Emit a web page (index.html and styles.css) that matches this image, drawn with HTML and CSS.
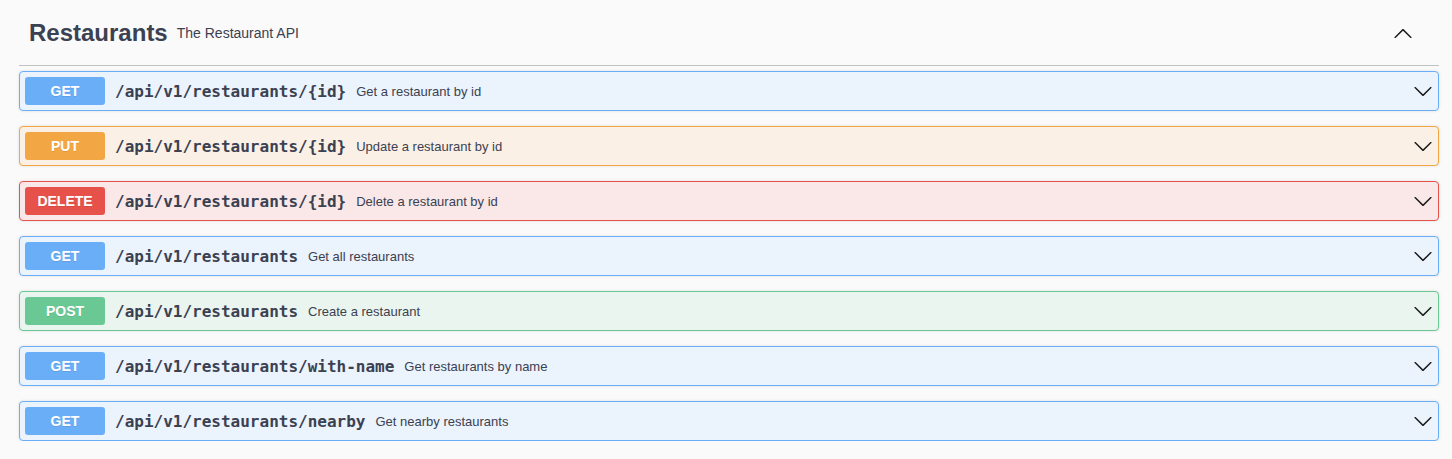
FILE: index.html
```html
<!DOCTYPE html>
<html>
<head>
<meta charset="utf-8">
<link rel="stylesheet" href="styles.css">
</head>
<body>
<div class="tag-section">
  <div class="tag-header">
    <div class="tag-title">
      <span class="tag-name">Restaurants</span>
      <span class="tag-desc">The Restaurant API</span>
    </div>
    <svg class="arrow arrow-up" width="20" height="20" viewBox="0 0 20 20"><path d="M17.418 6.109c.272-.268.709-.268.979 0s.271.701 0 .969l-7.908 7.83c-.27.268-.707.268-.979 0l-7.908-7.830c-.27-.268-.27-.701 0-.969.271-.268.709-.268.979 0L10 13.25l7.418-7.141z"/></svg>
  </div>
  <div class="ops">
    <div class="op get">
      <span class="method">GET</span>
      <span class="path">/api/v1/restaurants/{id}</span>
      <span class="desc">Get a restaurant by id</span>
      <svg class="arrow" width="20" height="20" viewBox="0 0 20 20"><path d="M17.418 6.109c.272-.268.709-.268.979 0s.271.701 0 .969l-7.908 7.83c-.27.268-.707.268-.979 0l-7.908-7.83c-.27-.268-.27-.701 0-.969.271-.268.709-.268.979 0L10 13.25l7.418-7.141z"/></svg>
    </div>
    <div class="op put">
      <span class="method">PUT</span>
      <span class="path">/api/v1/restaurants/{id}</span>
      <span class="desc">Update a restaurant by id</span>
      <svg class="arrow" width="20" height="20" viewBox="0 0 20 20"><path d="M17.418 6.109c.272-.268.709-.268.979 0s.271.701 0 .969l-7.908 7.83c-.27.268-.707.268-.979 0l-7.908-7.83c-.27-.268-.27-.701 0-.969.271-.268.709-.268.979 0L10 13.25l7.418-7.141z"/></svg>
    </div>
    <div class="op delete">
      <span class="method">DELETE</span>
      <span class="path">/api/v1/restaurants/{id}</span>
      <span class="desc">Delete a restaurant by id</span>
      <svg class="arrow" width="20" height="20" viewBox="0 0 20 20"><path d="M17.418 6.109c.272-.268.709-.268.979 0s.271.701 0 .969l-7.908 7.83c-.27.268-.707.268-.979 0l-7.908-7.83c-.27-.268-.27-.701 0-.969.271-.268.709-.268.979 0L10 13.25l7.418-7.141z"/></svg>
    </div>
    <div class="op get">
      <span class="method">GET</span>
      <span class="path">/api/v1/restaurants</span>
      <span class="desc">Get all restaurants</span>
      <svg class="arrow" width="20" height="20" viewBox="0 0 20 20"><path d="M17.418 6.109c.272-.268.709-.268.979 0s.271.701 0 .969l-7.908 7.83c-.27.268-.707.268-.979 0l-7.908-7.83c-.27-.268-.27-.701 0-.969.271-.268.709-.268.979 0L10 13.25l7.418-7.141z"/></svg>
    </div>
    <div class="op post">
      <span class="method">POST</span>
      <span class="path">/api/v1/restaurants</span>
      <span class="desc">Create a restaurant</span>
      <svg class="arrow" width="20" height="20" viewBox="0 0 20 20"><path d="M17.418 6.109c.272-.268.709-.268.979 0s.271.701 0 .969l-7.908 7.83c-.27.268-.707.268-.979 0l-7.908-7.83c-.27-.268-.27-.701 0-.969.271-.268.709-.268.979 0L10 13.25l7.418-7.141z"/></svg>
    </div>
    <div class="op get">
      <span class="method">GET</span>
      <span class="path">/api/v1/restaurants/with-name</span>
      <span class="desc">Get restaurants by name</span>
      <svg class="arrow" width="20" height="20" viewBox="0 0 20 20"><path d="M17.418 6.109c.272-.268.709-.268.979 0s.271.701 0 .969l-7.908 7.83c-.27.268-.707.268-.979 0l-7.908-7.83c-.27-.268-.27-.701 0-.969.271-.268.709-.268.979 0L10 13.25l7.418-7.141z"/></svg>
    </div>
    <div class="op get">
      <span class="method">GET</span>
      <span class="path">/api/v1/restaurants/nearby</span>
      <span class="desc">Get nearby restaurants</span>
      <svg class="arrow" width="20" height="20" viewBox="0 0 20 20"><path d="M17.418 6.109c.272-.268.709-.268.979 0s.271.701 0 .969l-7.908 7.83c-.27.268-.707.268-.979 0l-7.908-7.83c-.27-.268-.27-.701 0-.969.271-.268.709-.268.979 0L10 13.25l7.418-7.141z"/></svg>
    </div>
  </div>
</div>
</body>
</html>
```
FILE: styles.css
```css
html, body {
  margin: 0;
  padding: 0;
  background: #fafafa;
  font-family: "Liberation Sans", Arial, sans-serif;
  color: #3b4151;
}

.tag-section {
  padding: 0 13px 0 19px;
}

.tag-header {
  height: 65px;
  display: flex;
  align-items: center;
  justify-content: space-between;
  border-bottom: 1px solid rgba(59, 65, 81, 0.3);
  padding: 0 26px 0 10px;
  margin-bottom: 5px;
}

.tag-title {
  display: flex;
  align-items: center;
}

.tag-name {
  font-size: 24px;
  font-weight: bold;
  color: #3b4151;
}

.tag-desc {
  font-size: 14px;
  margin-left: 9px;
  color: #3b4151;
}

.arrow {
  display: block;
  flex: none;
  fill: #1b1b1b;
  margin-left: auto;
}

.arrow-up {
  transform: rotate(180deg);
  margin-top: 2px;
}

.ops {
  display: flex;
  flex-direction: column;
  gap: 15px;
}

.op {
  display: flex;
  align-items: center;
  border: 1px solid;
  border-radius: 4px;
  padding: 5px;
  box-shadow: 0 0 3px rgba(0, 0, 0, 0.12);
}

.method {
  flex: none;
  min-width: 80px;
  height: 28px;
  line-height: 28px;
  text-align: center;
  border-radius: 3px;
  color: #fff;
  font-size: 14px;
  font-weight: bold;
  text-shadow: 0 1px 0 rgba(0, 0, 0, 0.1);
}

.path {
  font-family: "DejaVu Sans Mono", monospace;
  font-weight: bold;
  font-size: 16px;
  padding: 0 10px;
  color: #3b4151;
}

.desc {
  font-size: 13px;
  color: #3b4151;
}

.get { background: #ebf3fc; border-color: #6aaef8; }
.get .method { background: #6aaef8; }

.put { background: #fbf0e5; border-color: #f3a744; }
.put .method { background: #f3a744; }

.delete { background: #f9e8e7; border-color: #e6524a; }
.delete .method { background: #e6524a; }

.post { background: #ebf5ef; border-color: #6ac894; }
.post .method { background: #6ac894; }
```
